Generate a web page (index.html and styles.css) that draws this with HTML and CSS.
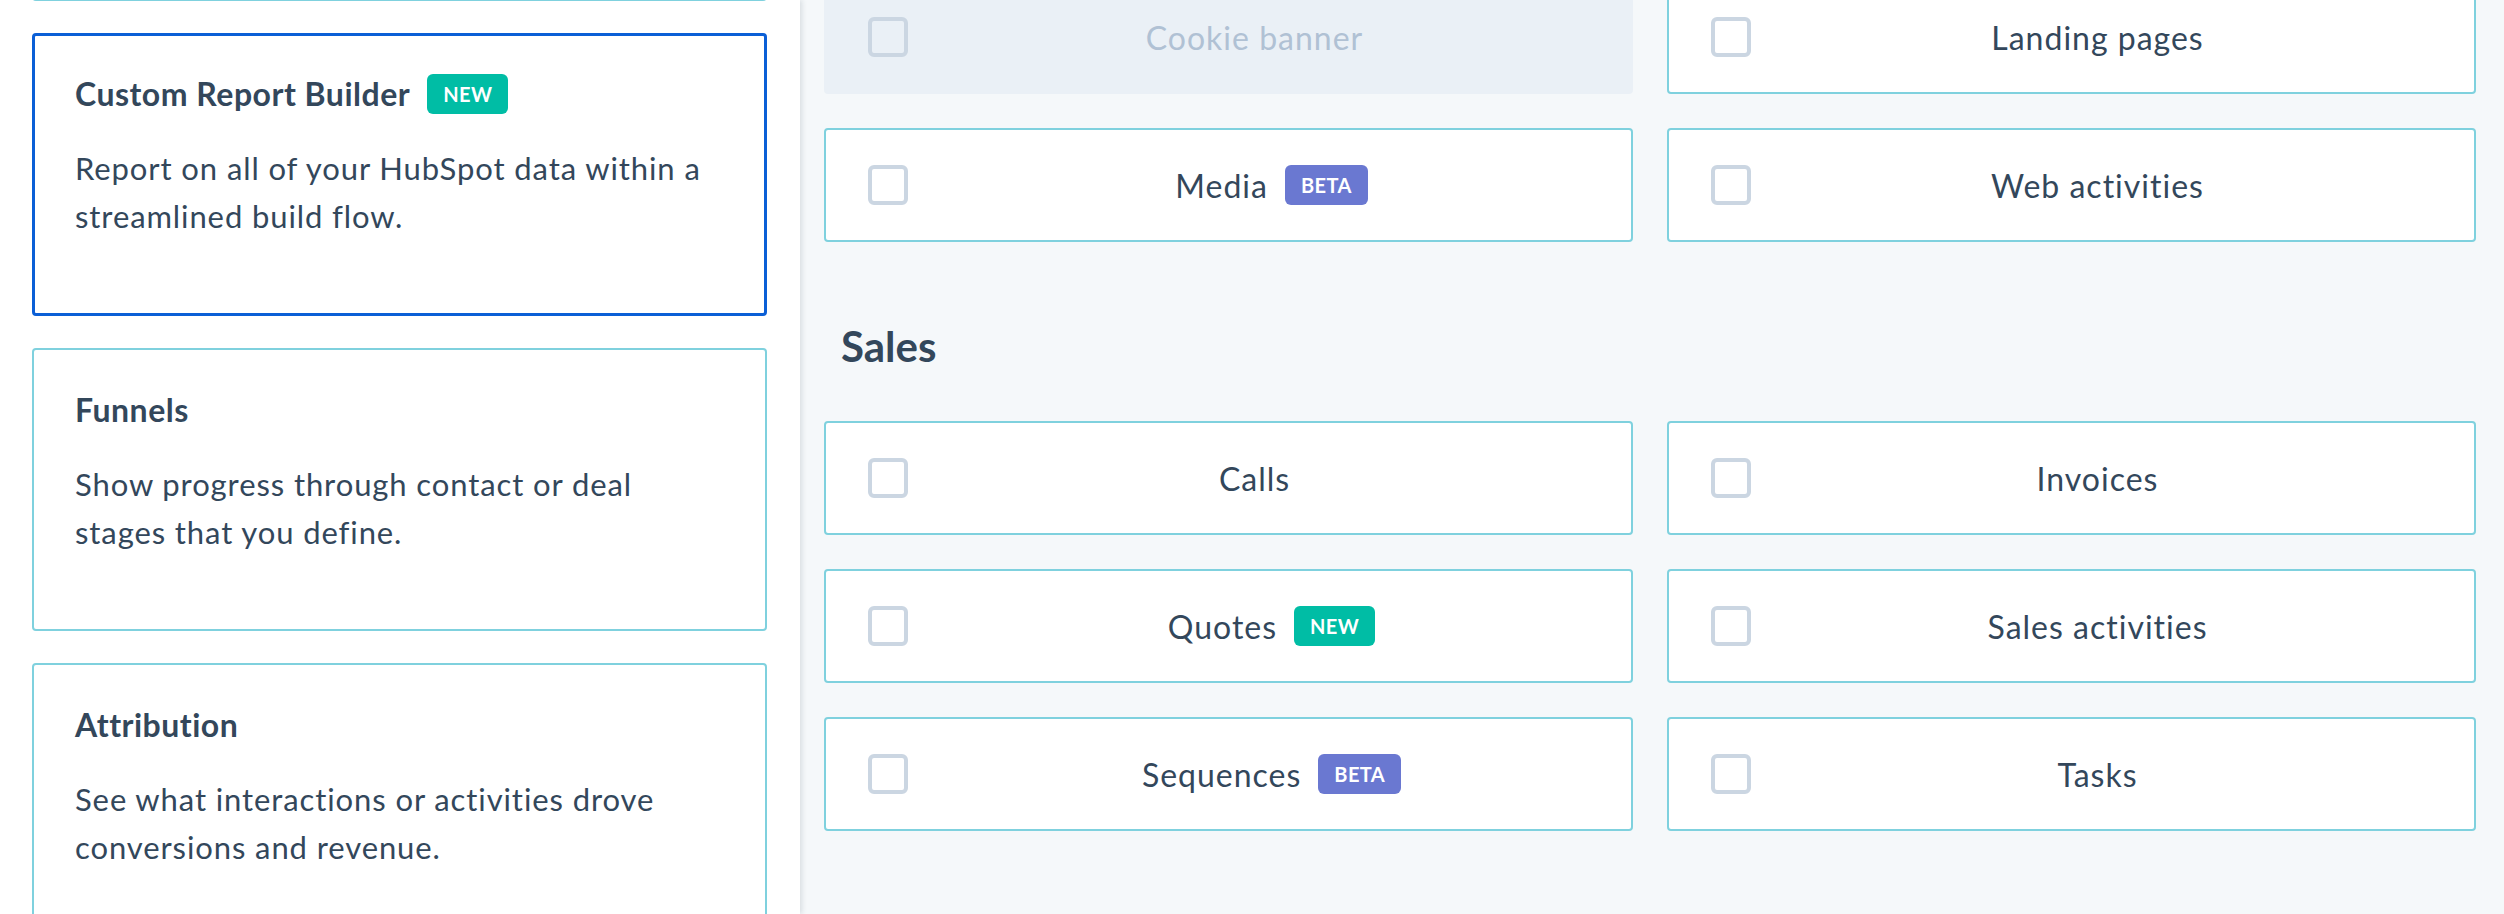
FILE: index.html
```html
<!DOCTYPE html>
<html lang="en">
<head>
<meta charset="utf-8">
<title>Create report</title>
<link rel="stylesheet" href="styles.css">
</head>
<body>
<div class="app">
  <aside class="sidebar">
    <div class="report-list">
      <div class="report-card report-card--stub"></div>
      <div class="report-card is-selected">
        <div class="report-title">Custom Report Builder <span class="tag tag--new">NEW</span></div>
        <p class="report-desc">Report on all of your HubSpot data within a streamlined build flow.</p>
      </div>
      <div class="report-card">
        <div class="report-title">Funnels</div>
        <p class="report-desc">Show progress through contact or deal stages that you define.</p>
      </div>
      <div class="report-card">
        <div class="report-title">Attribution</div>
        <p class="report-desc">See what interactions or activities drove conversions and revenue.</p>
      </div>
    </div>
  </aside>
  <main class="main">
    <section class="option-grid option-grid--cut">
      <div class="option option--disabled"><span class="checkbox"></span><span class="option-label">Cookie banner</span></div>
      <div class="option"><span class="checkbox"></span><span class="option-label">Landing pages</span></div>
      <div class="option"><span class="checkbox"></span><span class="option-label option-label--tagged">Media <span class="tag tag--beta">BETA</span></span></div>
      <div class="option"><span class="checkbox"></span><span class="option-label">Web activities</span></div>
    </section>
    <h2 class="section-title">Sales</h2>
    <section class="option-grid">
      <div class="option"><span class="checkbox"></span><span class="option-label">Calls</span></div>
      <div class="option"><span class="checkbox"></span><span class="option-label">Invoices</span></div>
      <div class="option"><span class="checkbox"></span><span class="option-label option-label--tagged">Quotes <span class="tag tag--new">NEW</span></span></div>
      <div class="option"><span class="checkbox"></span><span class="option-label">Sales activities</span></div>
      <div class="option"><span class="checkbox"></span><span class="option-label option-label--tagged">Sequences <span class="tag tag--beta">BETA</span></span></div>
      <div class="option"><span class="checkbox"></span><span class="option-label">Tasks</span></div>
    </section>
  </main>
</div>
</body>
</html>
```

FILE: styles.css
```css
* { box-sizing: border-box; }
html, body { margin: 0; height: 100%; }
body {
  font-family: Lato, "Liberation Sans", sans-serif;
  color: #33475b;
  background: #f5f8fa;
  overflow: hidden;
}
.app { display: flex; height: 914px; overflow: hidden; }

.sidebar {
  width: 800px;
  flex: none;
  background: #fff;
  padding: 0 33px 0 32px;
  position: relative;
  z-index: 1;
  box-shadow: 2px 0 5px rgba(45, 62, 80, 0.14);
  overflow: hidden;
}
.report-list { display: flex; flex-direction: column; gap: 32px; }
.report-card {
  border: 2px solid #7fd1de;
  border-radius: 4px;
  background: #fff;
  padding: 40px 41px 73px;
}
.report-card--stub { height: 250px; margin-top: -249px; padding: 0; }
.report-card.is-selected { border: 3px solid #0b5fd6; padding: 38px 40px 73px; }
.report-title {
  display: flex;
  align-items: center;
  gap: 17px;
  font-size: 32px;
  line-height: 40px;
  font-weight: 700;
  letter-spacing: 0.5px;
  margin: 0 0 30px;
}
.report-desc { margin: 0; font-size: 31px; line-height: 48px; letter-spacing: 0.9px; }

.tag {
  display: inline-flex;
  align-items: center;
  height: 40px;
  padding: 0 16px;
  border-radius: 6px;
  color: #fff;
  font-size: 20px;
  font-weight: 700;
  letter-spacing: 0.4px;
  line-height: 1;
}
.tag--new { background: #00bda5; }
.tag--beta { background: #6a78d1; }

.main { flex: 1; padding: 0 28px 0 24px; overflow: hidden; }
.option-grid {
  display: grid;
  grid-template-columns: 1fr 1fr;
  column-gap: 34px;
  row-gap: 34px;
}
.option-grid--cut { margin-top: -20px; }
.section-title {
  font-size: 42px;
  line-height: 48px;
  font-weight: 700;
  margin: 80px 0 51px;
  padding-left: 17px;
}
.option {
  height: 114px;
  display: flex;
  align-items: center;
  gap: 12px;
  padding: 0 42px;
  border: 2px solid #7fd1de;
  border-radius: 4px;
  background: #fff;
}
.option--disabled { background: #eaf0f6; border-color: #eaf0f6; color: #b0c1d4; }
.checkbox {
  width: 40px;
  height: 40px;
  flex: none;
  border: 4px solid #cbd6e2;
  border-radius: 6px;
  background: #fff;
}
.option--disabled .checkbox { background: transparent; }
.option-label {
  flex: 1;
  display: flex;
  justify-content: center;
  align-items: center;
  gap: 17px;
  font-size: 32px;
  letter-spacing: 1px;
}
.option-label .tag { letter-spacing: 0.4px; }
.option-label--tagged { padding-left: 34px; }
```
